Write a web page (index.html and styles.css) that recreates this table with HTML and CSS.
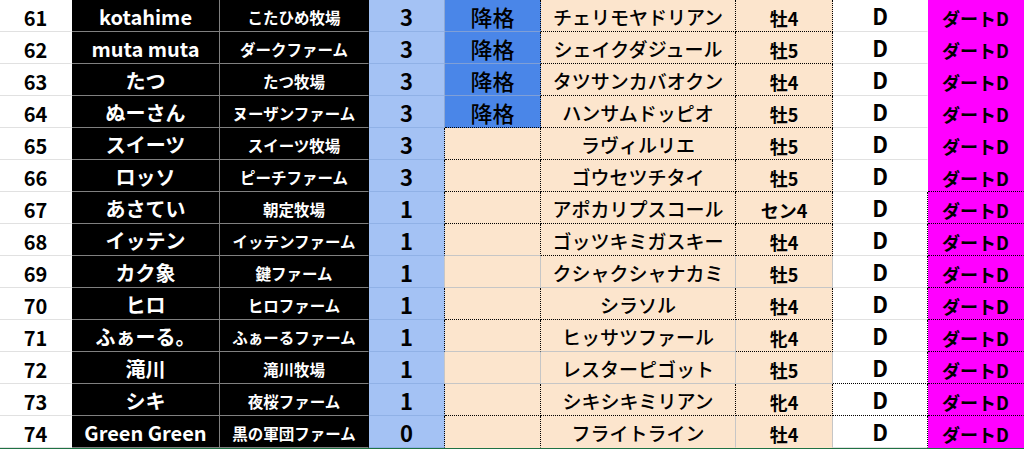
FILE: index.html
```html
<!DOCTYPE html>
<html lang="ja">
<head>
<meta charset="utf-8">
<title>ランキング表</title>
<link rel="stylesheet" href="styles.css">
</head>
<body>
<div class="sheet">
  <div class="c n">61</div><div class="c a">kotahime</div><div class="c s">こたひめ牧場</div><div class="c g">3</div><div class="c k down kb">降格</div><div class="c h bd rd">チェリモヤドリアン</div><div class="c x bd rd">牡4</div><div class="c d">D</div><div class="c t">ダートD</div>
  <div class="c n">62</div><div class="c a">muta muta</div><div class="c s">ダークファーム</div><div class="c g">3</div><div class="c k down kb">降格</div><div class="c h bd rd">シェイクダジュール</div><div class="c x bd rd">牡5</div><div class="c d">D</div><div class="c t">ダートD</div>
  <div class="c n">63</div><div class="c a">たつ</div><div class="c s">たつ牧場</div><div class="c g">3</div><div class="c k down kb">降格</div><div class="c h bd rd">タツサンカバオクン</div><div class="c x bd rd">牡4</div><div class="c d">D</div><div class="c t">ダートD</div>
  <div class="c n">64</div><div class="c a">ぬーさん</div><div class="c s">ヌーザンファーム</div><div class="c g">3</div><div class="c k down bd rd">降格</div><div class="c h bd rd">ハンサムドッピオ</div><div class="c x bd rd">牡5</div><div class="c d">D</div><div class="c t">ダートD</div>
  <div class="c n">65</div><div class="c a">スイーツ</div><div class="c s">スイーツ牧場</div><div class="c g gd">3</div><div class="c k bd rd"></div><div class="c h bd rd">ラヴィルリエ</div><div class="c x bd rd">牡5</div><div class="c d">D</div><div class="c t">ダートD</div>
  <div class="c n">66</div><div class="c a">ロッソ</div><div class="c s">ピーチファーム</div><div class="c g gd">3</div><div class="c k bd rd"></div><div class="c h bd rd">ゴウセツチタイ</div><div class="c x bd rd">牡5</div><div class="c d">D</div><div class="c t bd">ダートD</div>
  <div class="c n">67</div><div class="c a">あさてい</div><div class="c s">朝定牧場</div><div class="c g gd">1</div><div class="c k bd rd"></div><div class="c h bd rd">アポカリプスコール</div><div class="c x bd rd">セン4</div><div class="c d rd">D</div><div class="c t bd">ダートD</div>
  <div class="c n">68</div><div class="c a">イッテン</div><div class="c s">イッテンファーム</div><div class="c g gd">1</div><div class="c k bg rd"></div><div class="c h bd rd">ゴッツキミガスキー</div><div class="c x bd rd">牡4</div><div class="c d rd">D</div><div class="c t bd">ダートD</div>
  <div class="c n">69</div><div class="c a">カク象</div><div class="c s">鍵ファーム</div><div class="c g gg">1</div><div class="c k bg rg"></div><div class="c h bg rg">クシャクシャナカミ</div><div class="c x bg rg">牡5</div><div class="c d rd">D</div><div class="c t bd">ダートD</div>
  <div class="c n">70</div><div class="c a">ヒロ</div><div class="c s">ヒロファーム</div><div class="c g gd">1</div><div class="c k bd rd"></div><div class="c h bd rd">シラソル</div><div class="c x bd rd">牡4</div><div class="c d rd">D</div><div class="c t bd">ダートD</div>
  <div class="c n">71</div><div class="c a">ふぁーる。</div><div class="c s">ふぁーるファーム</div><div class="c g gd">1</div><div class="c k bg rd"></div><div class="c h bg rg">ヒッサツファール</div><div class="c x bd rd">牝4</div><div class="c d rd">D</div><div class="c t bd">ダートD</div>
  <div class="c n">72</div><div class="c a">滝川</div><div class="c s">滝川牧場</div><div class="c g gg">1</div><div class="c k bg rg"></div><div class="c h bg rg">レスターピゴット</div><div class="c x bg rg">牡5</div><div class="c d bd rd">D</div><div class="c t bd">ダートD</div>
  <div class="c n">73</div><div class="c a">シキ</div><div class="c s">夜桜ファーム</div><div class="c g gd">1</div><div class="c k bd rd"></div><div class="c h bd rd">シキシキミリアン</div><div class="c x bd rd">牝4</div><div class="c d bd rd">D</div><div class="c t bd">ダートD</div>
  <div class="c n">74</div><div class="c a">Green Green</div><div class="c s">黒の軍団ファーム</div><div class="c g gd">0</div><div class="c k rd"></div><div class="c h rg">フライトライン</div><div class="c x rg">牡4</div><div class="c d rd">D</div><div class="c t">ダートD</div>
</div>
<div class="edge"></div>
</body>
</html>
```
FILE: styles.css
```css
html, body {
  margin: 0;
  padding: 0;
  background: #ffffff;
}

body {
  font-family: "Noto Sans CJK JP", sans-serif;
  color: #000000;
  width: 1024px;
  height: 450px;
  overflow: hidden;
}

.sheet {
  display: grid;
  grid-template-columns: 72px 148px 149px 76px 96px 195px 97px 95px 96px;
  grid-auto-rows: 32px;
}

.c {
  box-sizing: border-box;
  display: flex;
  align-items: center;
  justify-content: center;
  white-space: nowrap;
  line-height: 1;
  font-weight: 700;
  border-right: 1px solid transparent;
  border-bottom: 1px solid transparent;
}

.n {
  font-size: 20px;
  border-bottom-color: #e1e1e1;
  padding-top: 5px;
}

.a {
  background: #000000;
  color: #ffffff;
  font-size: 20px;
  border-right-color: #808080;
  border-bottom-color: #808080;
  padding-top: 3px;
}

.s {
  background: #000000;
  color: #ffffff;
  font-size: 15.5px;
  border-bottom-color: #808080;
  padding-top: 5px;
}

.g {
  background: #a4c2f4;
  font-size: 22px;
  border-bottom-color: #90b1e6;
  border-right-color: #8ea8d4;
  padding-top: 1px;
}

.gd { border-right: 1px dotted #000000; }
.gg { border-right-color: #c6c6c6; }

.k {
  background: #fce5cd;
  font-size: 22px;
  font-weight: 500;
  padding-top: 1px;
}

.down {
  background: #4a86e8;
}

.kb {
  border-bottom-color: #7f9fd6;
  border-right: 1px dotted #000000;
}

.h {
  background: #fce5cd;
  font-size: 19px;
  font-weight: 500;
  padding-top: 2px;
}

.x {
  background: #fce5cd;
  font-size: 18px;
  padding-top: 4px;
}

.d {
  font-size: 22px;
  border-bottom-color: #e1e1e1;
  padding-bottom: 2px;
}

.t {
  background: #ff00ff;
  font-size: 18px;
  padding-top: 4px;
}

.bd { border-bottom: 1px dotted #000000; }
.rd { border-right: 1px dotted #000000; }
.bg { border-bottom: 1px solid #c6c6c6; }
.rg { border-right: 1px solid #c6c6c6; }

.edge {
  height: 1px;
  background: #1f7244;
}
```
